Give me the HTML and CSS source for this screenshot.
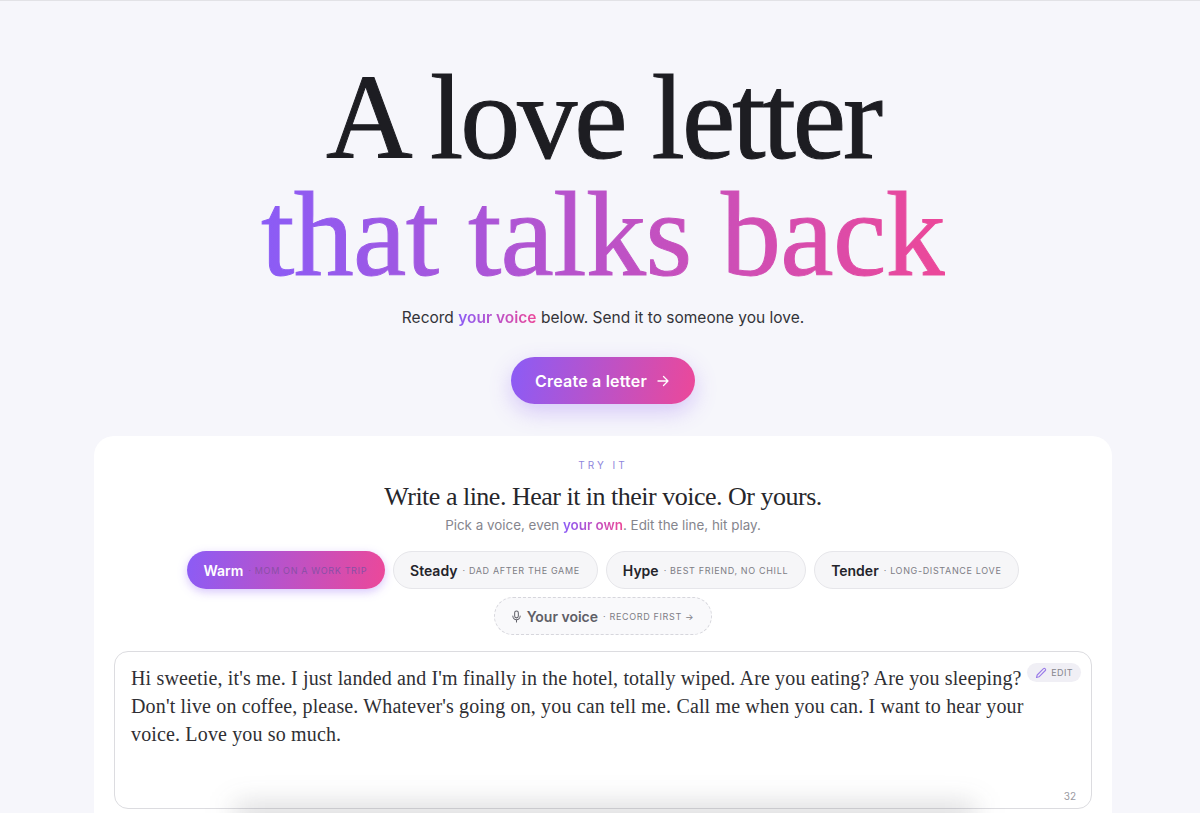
FILE: index.html
```html
<!DOCTYPE html>
<html>
<head>
  <meta charset="utf-8">
  <title>A love letter that talks back</title>
  <link rel="stylesheet" href="styles.css">
</head>
<body>
  <section class="hero">
    <h1 class="hero-title">
      <span class="hero-line first">A love letter</span>
      <span class="hero-line second grad-text">that talks back</span>
    </h1>
    <p class="hero-sub">Record <span class="grad-text strong">your voice</span> below. Send it to someone you love.</p>
    <a class="cta" href="#">Create a letter
      <svg class="cta-arrow" viewBox="0 0 14 14" width="14" height="14"><path d="M2 7h10M7.500 2.500 12 7l-4.500 4.500" fill="none" stroke="currentColor" stroke-width="1.300" stroke-linecap="round" stroke-linejoin="round"/></svg>
    </a>
  </section>

  <section class="card">
    <div class="eyebrow">TRY IT</div>
    <h2 class="card-title">Write a line. Hear it in their voice. Or yours.</h2>
    <p class="card-sub">Pick a voice, even <span class="grad-text strong">your own</span>. Edit the line, hit play.</p>

    <div class="voices">
      <button class="voice active"><b>Warm</b><span class="voice-note">· MOM ON A WORK TRIP</span></button>
      <button class="voice"><b>Steady</b><span class="voice-note">· DAD AFTER THE GAME</span></button>
      <button class="voice"><b>Hype</b><span class="voice-note">· BEST FRIEND, NO CHILL</span></button>
      <button class="voice"><b>Tender</b><span class="voice-note">· LONG-DISTANCE LOVE</span></button>
      <button class="voice own">
        <svg viewBox="0 0 12 14" width="11" height="13"><rect x="4" y="1" width="4" height="7.500" rx="2" fill="none" stroke="currentColor" stroke-width="1.100"/><path d="M2 6.500a4 4 0 0 0 8 0M6 10.500V13" fill="none" stroke="currentColor" stroke-width="1.100" stroke-linecap="round"/></svg>
        <b>Your voice</b><span class="voice-note">· RECORD FIRST →</span>
      </button>
    </div>

    <div class="editor">
      <p class="editor-text">Hi sweetie, it's me. I just landed and I'm finally in the hotel, totally wiped. Are you eating? Are you sleeping? Don't live on coffee, please. Whatever's going on, you can tell me. Call me when you can. I want to hear your voice. Love you so much.</p>
      <span class="edit-tag">
        <svg viewBox="0 0 12 12" width="12" height="12"><path d="M1.500 10.500 2.200 8 8.500 1.700a1.100 1.100 0 0 1 1.600 0l.2.2a1.100 1.100 0 0 1 0 1.600L4 9.800Z" fill="none" stroke="#9a7be8" stroke-width="1.100" stroke-linejoin="round"/></svg>
        EDIT
      </span>
      <span class="char-count">32</span>
    </div>
  </section>
  <div class="bottom-shadow"></div>
</body>
</html>
```

FILE: styles.css
```css
* {
  box-sizing: border-box;
}

html, body {
  height: 813px;
  overflow: hidden;
}

body {
  margin: 0;
  background: #f6f6fb;
  border-top: 1px solid #e2e2e6;
  font-family: Inter, "Noto Sans", sans-serif;
  color: #1d1d22;
  position: relative;
}

.grad-text {
  background: linear-gradient(90deg, #8b5cf6, #ec4899);
  -webkit-background-clip: text;
  background-clip: text;
  color: transparent;
}

.strong {
  font-weight: 600;
}

.hero {
  display: flex;
  flex-direction: column;
  align-items: center;
  padding: 58px 0 0 6px;
}

.hero-title {
  margin: 0;
  font-family: "Liberation Serif", serif;
  font-weight: 400;
  font-size: 120px;
  line-height: 117px;
  text-align: center;
  color: #1d1d22;
}

.hero-line {
  display: block;
  width: fit-content;
  margin: 0 auto;
}

.hero-line.first {
  letter-spacing: -3px;
  -webkit-text-stroke: 1px #1d1d22;
}

.hero-line.second {
  letter-spacing: -0.6px;
  -webkit-text-stroke: 1px transparent;
}

.hero-sub {
  margin: 13px 0 0;
  font-size: 15.500px;
  line-height: 24px;
  color: #333338;
}

.cta {
  display: flex;
  align-items: center;
  gap: 9px;
  margin-top: 27px;
  height: 47px;
  padding: 0 25px 0 24px;
  border-radius: 24px;
  background: linear-gradient(100deg, #8b5cf6, #ec4899);
  box-shadow: 0 8px 22px rgba(139, 92, 246, 0.3);
  color: #fff;
  font-size: 16px;
  font-weight: 600;
  letter-spacing: 0.2px;
  text-decoration: none;
}

.cta-arrow {
  margin-top: 1px;
}

.card {
  display: flex;
  flex-direction: column;
  align-items: center;
  margin: 32px 88px 0 94px;
  height: 400px;
  padding: 22px 20px 0;
  background: #fff;
  border-radius: 20px;
}

.eyebrow {
  font-size: 10px;
  line-height: 14px;
  letter-spacing: 3px;
  color: #8f86dc;
}

.card-title {
  margin: 9px 0 0;
  font-family: "Liberation Serif", serif;
  font-weight: 400;
  font-size: 26px;
  line-height: 32px;
  letter-spacing: -0.5px;
  color: #26262b;
}

.card-sub {
  margin: 3px 0 0;
  font-size: 13.400px;
  line-height: 18px;
  color: #85858d;
}

.voices {
  display: flex;
  flex-wrap: wrap;
  justify-content: center;
  gap: 8px;
  margin-top: 17px;
  width: 100%;
}

.voice {
  display: flex;
  align-items: center;
  gap: 5px;
  height: 38px;
  padding: 0 17px 0 16px;
  border: 1px solid #e6e6ea;
  border-radius: 19px;
  background: #f6f6f8;
  font-family: inherit;
  color: #24242a;
}

.voice b {
  font-size: 14px;
  font-weight: 600;
}

.voice-note {
  font-size: 9px;
  letter-spacing: 0.65px;
  color: #7d7d85;
}

.voice.active {
  border: none;
  padding: 0 18px 0 17px;
  background: linear-gradient(100deg, #8b5cf6, #ec4899);
  box-shadow: 0 3px 10px rgba(139, 92, 246, 0.35);
  color: #fff;
}

.voice.active .voice-note {
  color: #8a4fa6;
}

.voice.own {
  border: 1px dashed #d6d6dc;
  background: #f9f9fb;
  color: #5f5f67;
}

.editor {
  position: relative;
  align-self: stretch;
  height: 158px;
  margin-top: 16px;
  padding: 12px 50px 12px 16px;
  border: 1px solid #dcdce0;
  border-radius: 14px;
  background: #fff;
}

.editor-text {
  margin: 0;
  font-family: "Liberation Serif", serif;
  font-size: 20px;
  line-height: 28px;
  letter-spacing: 0.15px;
  color: #2f2f34;
}

.edit-tag {
  position: absolute;
  top: 11px;
  right: 10px;
  display: flex;
  align-items: center;
  gap: 4px;
  height: 19px;
  padding: 0 8px;
  border-radius: 10px;
  background: #f0eff5;
  font-size: 9px;
  letter-spacing: 0.4px;
  color: #85858d;
}

.char-count {
  position: absolute;
  right: 15px;
  bottom: 6px;
  font-size: 10px;
  color: #9a9aa2;
}

.bottom-shadow {
  position: absolute;
  left: 235px;
  top: 804px;
  width: 740px;
  height: 22px;
  background: rgba(60, 60, 70, 0.22);
  filter: blur(14px);
}
```
